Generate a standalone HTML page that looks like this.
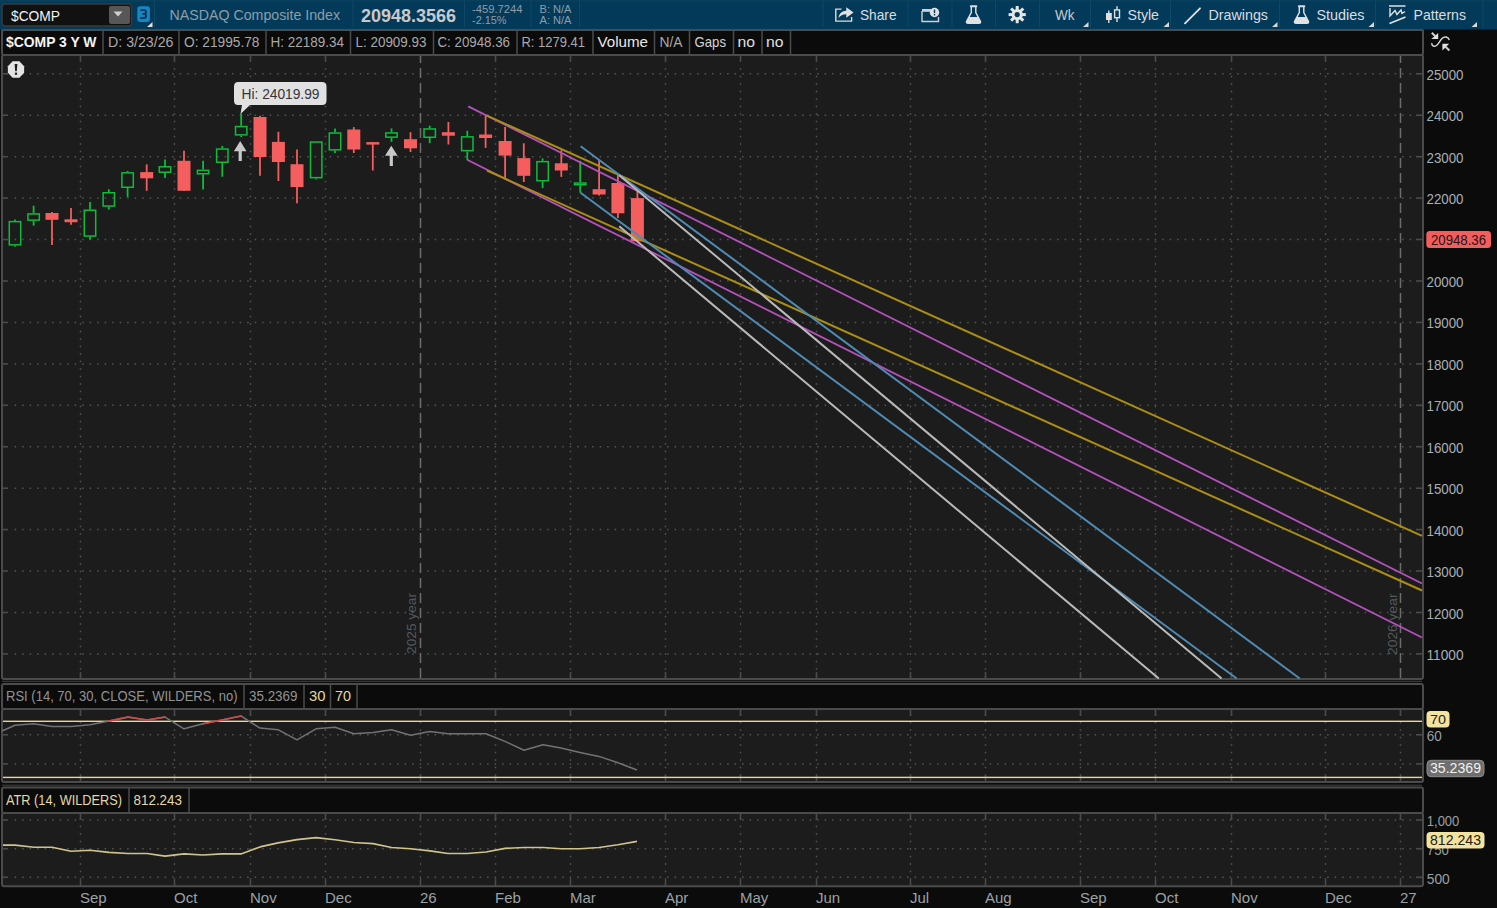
<!DOCTYPE html>
<html><head><meta charset="utf-8"><style>
html,body{margin:0;padding:0;background:#0b0b0b;width:1497px;height:908px;overflow:hidden}
svg{display:block}
</style></head><body>
<svg width="1497" height="908" viewBox="0 0 1497 908">
<rect x="0" y="0" width="1497" height="29.5" fill="#033a59"/>
<rect x="0" y="0" width="1497" height="1.6" fill="#0a3f5b"/>
<rect x="0" y="27.5" width="1423" height="1.5" fill="#013c5d"/>
<rect x="154.0" y="1" width="1" height="26" fill="#0f4767"/>
<rect x="352.5" y="1" width="1" height="26" fill="#0f4767"/>
<rect x="464.0" y="1" width="1" height="26" fill="#0f4767"/>
<rect x="530.5" y="1" width="1" height="26" fill="#0f4767"/>
<rect x="579.0" y="1" width="1" height="26" fill="#0f4767"/>
<rect x="822.5" y="1" width="1" height="26" fill="#0f4767"/>
<rect x="907.5" y="1" width="1" height="26" fill="#0f4767"/>
<rect x="951.5" y="1" width="1" height="26" fill="#0f4767"/>
<rect x="995.0" y="1" width="1" height="26" fill="#0f4767"/>
<rect x="1039.0" y="1" width="1" height="26" fill="#0f4767"/>
<rect x="1090.0" y="1" width="1" height="26" fill="#0f4767"/>
<rect x="1170.0" y="1" width="1" height="26" fill="#0f4767"/>
<rect x="1279.0" y="1" width="1" height="26" fill="#0f4767"/>
<rect x="1375.0" y="1" width="1" height="26" fill="#0f4767"/>
<rect x="1482.5" y="1" width="1" height="26" fill="#0f4767"/>
<rect x="2" y="4" width="129.5" height="22" rx="3" fill="#111" stroke="#3a3a3a" stroke-width="1.5"/>
<rect x="109" y="6" width="21" height="18" rx="2" fill="#575757"/>
<path d="M113.5 11.5 L122.5 11.5 L118 16.5 Z" fill="#cfcfcf"/>
<text x="11" y="20.6" font-family="Liberation Sans" font-size="14.2" font-weight="normal" fill="#f2f2f2" text-anchor="start" textLength="49" lengthAdjust="spacingAndGlyphs">$COMP</text>
<rect x="137.3" y="6.2" width="12.6" height="15.7" rx="2.8" fill="#1686c3"/>
<path d="M140.4 10.1 H144.2 Q146 10.1 146 11.9 Q146 13.9 143.9 13.9 H142.3 M143.9 13.9 Q146.1 13.9 146.1 16 Q146.1 18 143.9 18 H140.3" fill="none" stroke="#08385a" stroke-width="1.9"/>
<path d="M147 27 L152.5 22 L152.5 27 Z" fill="#dedede"/>
<text x="169.5" y="19.5" font-family="Liberation Sans" font-size="14" font-weight="normal" fill="#8b9eaa" text-anchor="start" textLength="170.5" lengthAdjust="spacingAndGlyphs">NASDAQ Composite Index</text>
<text x="361" y="22" font-family="Liberation Sans" font-size="17.5" font-weight="bold" fill="#c9c9c9" text-anchor="start" textLength="95" lengthAdjust="spacingAndGlyphs">20948.3566</text>
<text x="472" y="13" font-family="Liberation Sans" font-size="11.5" font-weight="normal" fill="#8b9eaa" text-anchor="start" textLength="50.5" lengthAdjust="spacingAndGlyphs">-459.7244</text>
<text x="472" y="24" font-family="Liberation Sans" font-size="11.5" font-weight="normal" fill="#8b9eaa" text-anchor="start" textLength="34.5" lengthAdjust="spacingAndGlyphs">-2.15%</text>
<text x="539.5" y="13" font-family="Liberation Sans" font-size="11.5" font-weight="normal" fill="#8b9eaa" text-anchor="start" textLength="32" lengthAdjust="spacingAndGlyphs">B: N/A</text>
<text x="539.5" y="24" font-family="Liberation Sans" font-size="11.5" font-weight="normal" fill="#8b9eaa" text-anchor="start" textLength="32" lengthAdjust="spacingAndGlyphs">A: N/A</text>
<path d="M841.5 9.1 H835.8 V21.1 H851.6 V17" fill="none" stroke="#dcdcdc" stroke-width="1.4"/>
<path d="M838.3 18.2 Q839.5 11.2 846.3 10.8 V7.3 L853.6 12.6 L846.3 17.8 V14.3 Q841.3 14.2 838.3 18.2 Z" fill="#e0e0e0"/>
<text x="860" y="20" font-family="Liberation Sans" font-size="14.6" font-weight="normal" fill="#d9dde0" text-anchor="start" textLength="36.5" lengthAdjust="spacingAndGlyphs">Share</text>
<path d="M922 11 H930 M922 11 V21.5 H938.5 V17" fill="none" stroke="#d0d0d0" stroke-width="1.4"/>
<rect x="922" y="9" width="9" height="2.2" fill="#d0d0d0"/>
<circle cx="934.5" cy="12.5" r="4.7" fill="#e0e0e0"/>
<rect x="933.8" y="9.5" width="1.4" height="3.6" fill="#043a5a"/><rect x="933.8" y="14" width="1.4" height="1.4" fill="#043a5a"/>
<rect x="969.9" y="5.2" width="7.4" height="2" rx="1" fill="#dcdcdc"/>
<path d="M971.3 7 V12.5 L966.5 21.5 Q966 23.2 968 23.2 H979 Q981 23.2 980.5 21.5 L975.8 12.5 V7" fill="none" stroke="#e2e2e2" stroke-width="1.4"/>
<path d="M968.5 17 H978.5 L980.5 21.5 Q981 23.2 979 23.2 H968 Q966 23.2 966.5 21.5 Z" fill="#e2e2e2"/>
<circle cx="1017.2" cy="14.6" r="5.6" fill="#e6e6e6"/>
<rect x="1015.7" y="6.0" width="3" height="5" fill="#e6e6e6" transform="rotate(0 1017.2 14.6)"/>
<rect x="1015.7" y="6.0" width="3" height="5" fill="#e6e6e6" transform="rotate(45 1017.2 14.6)"/>
<rect x="1015.7" y="6.0" width="3" height="5" fill="#e6e6e6" transform="rotate(90 1017.2 14.6)"/>
<rect x="1015.7" y="6.0" width="3" height="5" fill="#e6e6e6" transform="rotate(135 1017.2 14.6)"/>
<rect x="1015.7" y="6.0" width="3" height="5" fill="#e6e6e6" transform="rotate(180 1017.2 14.6)"/>
<rect x="1015.7" y="6.0" width="3" height="5" fill="#e6e6e6" transform="rotate(225 1017.2 14.6)"/>
<rect x="1015.7" y="6.0" width="3" height="5" fill="#e6e6e6" transform="rotate(270 1017.2 14.6)"/>
<rect x="1015.7" y="6.0" width="3" height="5" fill="#e6e6e6" transform="rotate(315 1017.2 14.6)"/>
<circle cx="1017.2" cy="14.6" r="2.6" fill="#033a59"/>
<text x="1055" y="20" font-family="Liberation Sans" font-size="14.6" font-weight="normal" fill="#c8ccce" text-anchor="start" textLength="19.5" lengthAdjust="spacingAndGlyphs">Wk</text>
<path d="M1083 27 L1088.5 22 L1088.5 27 Z" fill="#d8d8d8"/>
<path d="M1163.5 27 L1169.0 22 L1169.0 27 Z" fill="#d8d8d8"/>
<path d="M1272 27 L1277.5 22 L1277.5 27 Z" fill="#d8d8d8"/>
<path d="M1368.5 27 L1374.0 22 L1374.0 27 Z" fill="#d8d8d8"/>
<path d="M1471.5 27 L1477.0 22 L1477.0 27 Z" fill="#d8d8d8"/>
<path d="M1108.8 10.5 V23 M1117 6.3 V22" stroke="#e0e0e0" stroke-width="1.4"/>
<rect x="1106" y="13" width="5.8" height="7" fill="#e0e0e0"/>
<rect x="1114.6" y="9.9" width="4.9" height="7.8" fill="#043a5a" stroke="#e0e0e0" stroke-width="1.4"/>
<text x="1127.5" y="20" font-family="Liberation Sans" font-size="14.6" font-weight="normal" fill="#d9dde0" text-anchor="start" textLength="31.5" lengthAdjust="spacingAndGlyphs">Style</text>
<line x1="1185" y1="23.3" x2="1200" y2="8.3" stroke="#dedede" stroke-width="1.9" stroke-linecap="round"/>
<text x="1208.5" y="20" font-family="Liberation Sans" font-size="14.6" font-weight="normal" fill="#d9dde0" text-anchor="start" textLength="59.5" lengthAdjust="spacingAndGlyphs">Drawings</text>
<rect x="1297.9" y="5.2" width="7.4" height="2" rx="1" fill="#dcdcdc"/>
<path d="M1299.3 7 V12.5 L1294.5 21.5 Q1294 23.2 1296 23.2 H1307 Q1309 23.2 1308.5 21.5 L1303.8 12.5 V7" fill="none" stroke="#e2e2e2" stroke-width="1.4"/>
<path d="M1296.5 17 H1306.5 L1308.5 21.5 Q1309 23.2 1307 23.2 H1296 Q1294 23.2 1294.5 21.5 Z" fill="#e2e2e2"/>
<text x="1316.5" y="20" font-family="Liberation Sans" font-size="14.6" font-weight="normal" fill="#d9dde0" text-anchor="start" textLength="48" lengthAdjust="spacingAndGlyphs">Studies</text>
<path d="M1389 6 H1405.5" stroke="#e0e0e0" stroke-width="1.5"/>
<path d="M1390 8 V16 L1395 10.5 L1397 14.5 L1401 10 L1402 13.5 L1405 11.5" fill="none" stroke="#e0e0e0" stroke-width="1.4"/>
<path d="M1389.5 23.5 L1405.5 17" stroke="#e0e0e0" stroke-width="1.7"/>
<text x="1413.5" y="20" font-family="Liberation Sans" font-size="14.6" font-weight="normal" fill="#d9dde0" text-anchor="start" textLength="52.5" lengthAdjust="spacingAndGlyphs">Patterns</text>
<rect x="1" y="29.3" width="1423" height="1.7" fill="#3d4347"/>
<rect x="2" y="30" width="1421" height="25" rx="2" fill="#0b0b0b" stroke="#4b4b4b" stroke-width="2"/>
<rect x="102.25" y="30" width="1.5" height="25" fill="#4b4b4b"/>
<rect x="178.25" y="30" width="1.5" height="25" fill="#4b4b4b"/>
<rect x="265.25" y="30" width="1.5" height="25" fill="#4b4b4b"/>
<rect x="349.75" y="30" width="1.5" height="25" fill="#4b4b4b"/>
<rect x="432.75" y="30" width="1.5" height="25" fill="#4b4b4b"/>
<rect x="516.25" y="30" width="1.5" height="25" fill="#4b4b4b"/>
<rect x="592.25" y="30" width="1.5" height="25" fill="#4b4b4b"/>
<rect x="653.75" y="30" width="1.5" height="25" fill="#4b4b4b"/>
<rect x="688.75" y="30" width="1.5" height="25" fill="#4b4b4b"/>
<rect x="732.75" y="30" width="1.5" height="25" fill="#4b4b4b"/>
<rect x="761.25" y="30" width="1.5" height="25" fill="#4b4b4b"/>
<rect x="789.75" y="30" width="1.5" height="25" fill="#4b4b4b"/>
<text x="6" y="46.6" font-family="Liberation Sans" font-size="14.8" font-weight="bold" fill="#f4f4f4" text-anchor="start" textLength="90.5" lengthAdjust="spacingAndGlyphs">$COMP 3 Y W</text>
<text x="108" y="46.6" font-family="Liberation Sans" font-size="14.8" font-weight="normal" fill="#a9a9a9" text-anchor="start" textLength="65.5" lengthAdjust="spacingAndGlyphs">D: 3/23/26</text>
<text x="184" y="46.6" font-family="Liberation Sans" font-size="14.8" font-weight="normal" fill="#a9a9a9" text-anchor="start" textLength="75.5" lengthAdjust="spacingAndGlyphs">O: 21995.78</text>
<text x="270.5" y="46.6" font-family="Liberation Sans" font-size="14.8" font-weight="normal" fill="#a9a9a9" text-anchor="start" textLength="73.5" lengthAdjust="spacingAndGlyphs">H: 22189.34</text>
<text x="355.5" y="46.6" font-family="Liberation Sans" font-size="14.8" font-weight="normal" fill="#a9a9a9" text-anchor="start" textLength="71" lengthAdjust="spacingAndGlyphs">L: 20909.93</text>
<text x="437.5" y="46.6" font-family="Liberation Sans" font-size="14.8" font-weight="normal" fill="#a9a9a9" text-anchor="start" textLength="72.5" lengthAdjust="spacingAndGlyphs">C: 20948.36</text>
<text x="521.5" y="46.6" font-family="Liberation Sans" font-size="14.8" font-weight="normal" fill="#a9a9a9" text-anchor="start" textLength="63.5" lengthAdjust="spacingAndGlyphs">R: 1279.41</text>
<text x="597.5" y="46.6" font-family="Liberation Sans" font-size="14.8" font-weight="normal" fill="#e8e8e8" text-anchor="start" textLength="50.5" lengthAdjust="spacingAndGlyphs">Volume</text>
<text x="659.5" y="46.6" font-family="Liberation Sans" font-size="14.8" font-weight="normal" fill="#a9a9a9" text-anchor="start" textLength="23" lengthAdjust="spacingAndGlyphs">N/A</text>
<text x="694.5" y="46.6" font-family="Liberation Sans" font-size="14.8" font-weight="normal" fill="#d4d4d4" text-anchor="start" textLength="31.5" lengthAdjust="spacingAndGlyphs">Gaps</text>
<text x="737.5" y="46.6" font-family="Liberation Sans" font-size="14.8" font-weight="normal" fill="#e0e0e0" text-anchor="start" textLength="17.5" lengthAdjust="spacingAndGlyphs">no</text>
<text x="766" y="46.6" font-family="Liberation Sans" font-size="14.8" font-weight="normal" fill="#e0e0e0" text-anchor="start" textLength="17.5" lengthAdjust="spacingAndGlyphs">no</text>
<rect x="2" y="55" width="1421" height="624" rx="2" fill="#1c1c1c" stroke="#4b4b4b" stroke-width="2"/>
<line x1="14.65" y1="73.8" x2="1415" y2="73.8" stroke="#545454" stroke-width="1.5" stroke-dasharray="1.5,6"/>
<line x1="3" y1="73.8" x2="8" y2="73.8" stroke="#4b4b4b" stroke-width="1.6"/>
<line x1="1416" y1="73.8" x2="1422" y2="73.8" stroke="#4b4b4b" stroke-width="1.6"/>
<text x="1426.5" y="79.8" font-family="Liberation Sans" font-size="14.6" font-weight="normal" fill="#a9b0b4" text-anchor="start" textLength="37" lengthAdjust="spacingAndGlyphs">25000</text>
<line x1="14.65" y1="115.2" x2="1415" y2="115.2" stroke="#545454" stroke-width="1.5" stroke-dasharray="1.5,6"/>
<line x1="3" y1="115.2" x2="8" y2="115.2" stroke="#4b4b4b" stroke-width="1.6"/>
<line x1="1416" y1="115.2" x2="1422" y2="115.2" stroke="#4b4b4b" stroke-width="1.6"/>
<text x="1426.5" y="121.2" font-family="Liberation Sans" font-size="14.6" font-weight="normal" fill="#a9b0b4" text-anchor="start" textLength="37" lengthAdjust="spacingAndGlyphs">24000</text>
<line x1="14.65" y1="156.7" x2="1415" y2="156.7" stroke="#545454" stroke-width="1.5" stroke-dasharray="1.5,6"/>
<line x1="3" y1="156.7" x2="8" y2="156.7" stroke="#4b4b4b" stroke-width="1.6"/>
<line x1="1416" y1="156.7" x2="1422" y2="156.7" stroke="#4b4b4b" stroke-width="1.6"/>
<text x="1426.5" y="162.7" font-family="Liberation Sans" font-size="14.6" font-weight="normal" fill="#a9b0b4" text-anchor="start" textLength="37" lengthAdjust="spacingAndGlyphs">23000</text>
<line x1="14.65" y1="198.1" x2="1415" y2="198.1" stroke="#545454" stroke-width="1.5" stroke-dasharray="1.5,6"/>
<line x1="3" y1="198.1" x2="8" y2="198.1" stroke="#4b4b4b" stroke-width="1.6"/>
<line x1="1416" y1="198.1" x2="1422" y2="198.1" stroke="#4b4b4b" stroke-width="1.6"/>
<text x="1426.5" y="204.1" font-family="Liberation Sans" font-size="14.6" font-weight="normal" fill="#a9b0b4" text-anchor="start" textLength="37" lengthAdjust="spacingAndGlyphs">22000</text>
<line x1="14.65" y1="239.5" x2="1415" y2="239.5" stroke="#545454" stroke-width="1.5" stroke-dasharray="1.5,6"/>
<line x1="3" y1="239.5" x2="8" y2="239.5" stroke="#4b4b4b" stroke-width="1.6"/>
<line x1="1416" y1="239.5" x2="1422" y2="239.5" stroke="#4b4b4b" stroke-width="1.6"/>
<line x1="14.65" y1="281.0" x2="1415" y2="281.0" stroke="#545454" stroke-width="1.5" stroke-dasharray="1.5,6"/>
<line x1="3" y1="281.0" x2="8" y2="281.0" stroke="#4b4b4b" stroke-width="1.6"/>
<line x1="1416" y1="281.0" x2="1422" y2="281.0" stroke="#4b4b4b" stroke-width="1.6"/>
<text x="1426.5" y="287.0" font-family="Liberation Sans" font-size="14.6" font-weight="normal" fill="#a9b0b4" text-anchor="start" textLength="37" lengthAdjust="spacingAndGlyphs">20000</text>
<line x1="14.65" y1="322.4" x2="1415" y2="322.4" stroke="#545454" stroke-width="1.5" stroke-dasharray="1.5,6"/>
<line x1="3" y1="322.4" x2="8" y2="322.4" stroke="#4b4b4b" stroke-width="1.6"/>
<line x1="1416" y1="322.4" x2="1422" y2="322.4" stroke="#4b4b4b" stroke-width="1.6"/>
<text x="1426.5" y="328.4" font-family="Liberation Sans" font-size="14.6" font-weight="normal" fill="#a9b0b4" text-anchor="start" textLength="37" lengthAdjust="spacingAndGlyphs">19000</text>
<line x1="14.65" y1="363.9" x2="1415" y2="363.9" stroke="#545454" stroke-width="1.5" stroke-dasharray="1.5,6"/>
<line x1="3" y1="363.9" x2="8" y2="363.9" stroke="#4b4b4b" stroke-width="1.6"/>
<line x1="1416" y1="363.9" x2="1422" y2="363.9" stroke="#4b4b4b" stroke-width="1.6"/>
<text x="1426.5" y="369.9" font-family="Liberation Sans" font-size="14.6" font-weight="normal" fill="#a9b0b4" text-anchor="start" textLength="37" lengthAdjust="spacingAndGlyphs">18000</text>
<line x1="14.65" y1="405.3" x2="1415" y2="405.3" stroke="#545454" stroke-width="1.5" stroke-dasharray="1.5,6"/>
<line x1="3" y1="405.3" x2="8" y2="405.3" stroke="#4b4b4b" stroke-width="1.6"/>
<line x1="1416" y1="405.3" x2="1422" y2="405.3" stroke="#4b4b4b" stroke-width="1.6"/>
<text x="1426.5" y="411.3" font-family="Liberation Sans" font-size="14.6" font-weight="normal" fill="#a9b0b4" text-anchor="start" textLength="37" lengthAdjust="spacingAndGlyphs">17000</text>
<line x1="14.65" y1="446.7" x2="1415" y2="446.7" stroke="#545454" stroke-width="1.5" stroke-dasharray="1.5,6"/>
<line x1="3" y1="446.7" x2="8" y2="446.7" stroke="#4b4b4b" stroke-width="1.6"/>
<line x1="1416" y1="446.7" x2="1422" y2="446.7" stroke="#4b4b4b" stroke-width="1.6"/>
<text x="1426.5" y="452.7" font-family="Liberation Sans" font-size="14.6" font-weight="normal" fill="#a9b0b4" text-anchor="start" textLength="37" lengthAdjust="spacingAndGlyphs">16000</text>
<line x1="14.65" y1="488.2" x2="1415" y2="488.2" stroke="#545454" stroke-width="1.5" stroke-dasharray="1.5,6"/>
<line x1="3" y1="488.2" x2="8" y2="488.2" stroke="#4b4b4b" stroke-width="1.6"/>
<line x1="1416" y1="488.2" x2="1422" y2="488.2" stroke="#4b4b4b" stroke-width="1.6"/>
<text x="1426.5" y="494.2" font-family="Liberation Sans" font-size="14.6" font-weight="normal" fill="#a9b0b4" text-anchor="start" textLength="37" lengthAdjust="spacingAndGlyphs">15000</text>
<line x1="14.65" y1="529.6" x2="1415" y2="529.6" stroke="#545454" stroke-width="1.5" stroke-dasharray="1.5,6"/>
<line x1="3" y1="529.6" x2="8" y2="529.6" stroke="#4b4b4b" stroke-width="1.6"/>
<line x1="1416" y1="529.6" x2="1422" y2="529.6" stroke="#4b4b4b" stroke-width="1.6"/>
<text x="1426.5" y="535.6" font-family="Liberation Sans" font-size="14.6" font-weight="normal" fill="#a9b0b4" text-anchor="start" textLength="37" lengthAdjust="spacingAndGlyphs">14000</text>
<line x1="14.65" y1="571.0" x2="1415" y2="571.0" stroke="#545454" stroke-width="1.5" stroke-dasharray="1.5,6"/>
<line x1="3" y1="571.0" x2="8" y2="571.0" stroke="#4b4b4b" stroke-width="1.6"/>
<line x1="1416" y1="571.0" x2="1422" y2="571.0" stroke="#4b4b4b" stroke-width="1.6"/>
<text x="1426.5" y="577.0" font-family="Liberation Sans" font-size="14.6" font-weight="normal" fill="#a9b0b4" text-anchor="start" textLength="37" lengthAdjust="spacingAndGlyphs">13000</text>
<line x1="14.65" y1="612.5" x2="1415" y2="612.5" stroke="#545454" stroke-width="1.5" stroke-dasharray="1.5,6"/>
<line x1="3" y1="612.5" x2="8" y2="612.5" stroke="#4b4b4b" stroke-width="1.6"/>
<line x1="1416" y1="612.5" x2="1422" y2="612.5" stroke="#4b4b4b" stroke-width="1.6"/>
<text x="1426.5" y="618.5" font-family="Liberation Sans" font-size="14.6" font-weight="normal" fill="#a9b0b4" text-anchor="start" textLength="37" lengthAdjust="spacingAndGlyphs">12000</text>
<line x1="14.65" y1="653.9" x2="1415" y2="653.9" stroke="#545454" stroke-width="1.5" stroke-dasharray="1.5,6"/>
<line x1="3" y1="653.9" x2="8" y2="653.9" stroke="#4b4b4b" stroke-width="1.6"/>
<line x1="1416" y1="653.9" x2="1422" y2="653.9" stroke="#4b4b4b" stroke-width="1.6"/>
<text x="1426.5" y="659.9" font-family="Liberation Sans" font-size="14.6" font-weight="normal" fill="#a9b0b4" text-anchor="start" textLength="37" lengthAdjust="spacingAndGlyphs">11000</text>
<line x1="80.5" y1="68.25" x2="80.5" y2="678" stroke="#545454" stroke-width="1.5" stroke-dasharray="1.5,6"/>
<line x1="80.5" y1="56" x2="80.5" y2="62" stroke="#4b4b4b" stroke-width="1.6"/>
<line x1="80.5" y1="672" x2="80.5" y2="678" stroke="#4b4b4b" stroke-width="1.6"/>
<line x1="174.5" y1="68.25" x2="174.5" y2="678" stroke="#545454" stroke-width="1.5" stroke-dasharray="1.5,6"/>
<line x1="174.5" y1="56" x2="174.5" y2="62" stroke="#4b4b4b" stroke-width="1.6"/>
<line x1="174.5" y1="672" x2="174.5" y2="678" stroke="#4b4b4b" stroke-width="1.6"/>
<line x1="250.5" y1="68.25" x2="250.5" y2="678" stroke="#545454" stroke-width="1.5" stroke-dasharray="1.5,6"/>
<line x1="250.5" y1="56" x2="250.5" y2="62" stroke="#4b4b4b" stroke-width="1.6"/>
<line x1="250.5" y1="672" x2="250.5" y2="678" stroke="#4b4b4b" stroke-width="1.6"/>
<line x1="325.5" y1="68.25" x2="325.5" y2="678" stroke="#545454" stroke-width="1.5" stroke-dasharray="1.5,6"/>
<line x1="325.5" y1="56" x2="325.5" y2="62" stroke="#4b4b4b" stroke-width="1.6"/>
<line x1="325.5" y1="672" x2="325.5" y2="678" stroke="#4b4b4b" stroke-width="1.6"/>
<line x1="420.5" y1="56" x2="420.5" y2="678" stroke="#6c6c6c" stroke-width="1.5" stroke-dasharray="10,5" stroke-dashoffset="3"/>
<line x1="495.5" y1="68.25" x2="495.5" y2="678" stroke="#545454" stroke-width="1.5" stroke-dasharray="1.5,6"/>
<line x1="495.5" y1="56" x2="495.5" y2="62" stroke="#4b4b4b" stroke-width="1.6"/>
<line x1="495.5" y1="672" x2="495.5" y2="678" stroke="#4b4b4b" stroke-width="1.6"/>
<line x1="570.5" y1="68.25" x2="570.5" y2="678" stroke="#545454" stroke-width="1.5" stroke-dasharray="1.5,6"/>
<line x1="570.5" y1="56" x2="570.5" y2="62" stroke="#4b4b4b" stroke-width="1.6"/>
<line x1="570.5" y1="672" x2="570.5" y2="678" stroke="#4b4b4b" stroke-width="1.6"/>
<line x1="665.5" y1="68.25" x2="665.5" y2="678" stroke="#545454" stroke-width="1.5" stroke-dasharray="1.5,6"/>
<line x1="665.5" y1="56" x2="665.5" y2="62" stroke="#4b4b4b" stroke-width="1.6"/>
<line x1="665.5" y1="672" x2="665.5" y2="678" stroke="#4b4b4b" stroke-width="1.6"/>
<line x1="740.5" y1="68.25" x2="740.5" y2="678" stroke="#545454" stroke-width="1.5" stroke-dasharray="1.5,6"/>
<line x1="740.5" y1="56" x2="740.5" y2="62" stroke="#4b4b4b" stroke-width="1.6"/>
<line x1="740.5" y1="672" x2="740.5" y2="678" stroke="#4b4b4b" stroke-width="1.6"/>
<line x1="816.5" y1="68.25" x2="816.5" y2="678" stroke="#545454" stroke-width="1.5" stroke-dasharray="1.5,6"/>
<line x1="816.5" y1="56" x2="816.5" y2="62" stroke="#4b4b4b" stroke-width="1.6"/>
<line x1="816.5" y1="672" x2="816.5" y2="678" stroke="#4b4b4b" stroke-width="1.6"/>
<line x1="910.5" y1="68.25" x2="910.5" y2="678" stroke="#545454" stroke-width="1.5" stroke-dasharray="1.5,6"/>
<line x1="910.5" y1="56" x2="910.5" y2="62" stroke="#4b4b4b" stroke-width="1.6"/>
<line x1="910.5" y1="672" x2="910.5" y2="678" stroke="#4b4b4b" stroke-width="1.6"/>
<line x1="985.5" y1="68.25" x2="985.5" y2="678" stroke="#545454" stroke-width="1.5" stroke-dasharray="1.5,6"/>
<line x1="985.5" y1="56" x2="985.5" y2="62" stroke="#4b4b4b" stroke-width="1.6"/>
<line x1="985.5" y1="672" x2="985.5" y2="678" stroke="#4b4b4b" stroke-width="1.6"/>
<line x1="1080.5" y1="68.25" x2="1080.5" y2="678" stroke="#545454" stroke-width="1.5" stroke-dasharray="1.5,6"/>
<line x1="1080.5" y1="56" x2="1080.5" y2="62" stroke="#4b4b4b" stroke-width="1.6"/>
<line x1="1080.5" y1="672" x2="1080.5" y2="678" stroke="#4b4b4b" stroke-width="1.6"/>
<line x1="1155.5" y1="68.25" x2="1155.5" y2="678" stroke="#545454" stroke-width="1.5" stroke-dasharray="1.5,6"/>
<line x1="1155.5" y1="56" x2="1155.5" y2="62" stroke="#4b4b4b" stroke-width="1.6"/>
<line x1="1155.5" y1="672" x2="1155.5" y2="678" stroke="#4b4b4b" stroke-width="1.6"/>
<line x1="1231.5" y1="68.25" x2="1231.5" y2="678" stroke="#545454" stroke-width="1.5" stroke-dasharray="1.5,6"/>
<line x1="1231.5" y1="56" x2="1231.5" y2="62" stroke="#4b4b4b" stroke-width="1.6"/>
<line x1="1231.5" y1="672" x2="1231.5" y2="678" stroke="#4b4b4b" stroke-width="1.6"/>
<line x1="1325.5" y1="68.25" x2="1325.5" y2="678" stroke="#545454" stroke-width="1.5" stroke-dasharray="1.5,6"/>
<line x1="1325.5" y1="56" x2="1325.5" y2="62" stroke="#4b4b4b" stroke-width="1.6"/>
<line x1="1325.5" y1="672" x2="1325.5" y2="678" stroke="#4b4b4b" stroke-width="1.6"/>
<line x1="1400.5" y1="56" x2="1400.5" y2="678" stroke="#6c6c6c" stroke-width="1.5" stroke-dasharray="10,5" stroke-dashoffset="3"/>
<rect x="2" y="680.7" width="1420" height="1.4" fill="#363636"/>
<line x1="15" y1="219.5" x2="15" y2="220.9" stroke="#0cbd3c" stroke-width="1.8"/>
<line x1="15" y1="245.6" x2="15" y2="246.8" stroke="#0cbd3c" stroke-width="1.8"/>
<rect x="9.3" y="221.65" width="11.4" height="23.19999999999999" fill="none" stroke="#0cbd3c" stroke-width="1.5"/>
<line x1="33.6" y1="205.7" x2="33.6" y2="213.2" stroke="#0cbd3c" stroke-width="1.8"/>
<line x1="33.6" y1="220.9" x2="33.6" y2="225.7" stroke="#0cbd3c" stroke-width="1.8"/>
<rect x="27.900000000000002" y="213.95" width="11.4" height="6.200000000000017" fill="none" stroke="#0cbd3c" stroke-width="1.5"/>
<line x1="52" y1="212.1" x2="52" y2="244.9" stroke="#f45e5e" stroke-width="1.8"/>
<rect x="45.5" y="213" width="13" height="6.800000000000011" fill="#f45e5e"/>
<line x1="71" y1="208" x2="71" y2="224.8" stroke="#f45e5e" stroke-width="1.8"/>
<rect x="64.5" y="219.3" width="13" height="2.8999999999999773" fill="#f45e5e"/>
<line x1="90" y1="201.9" x2="90" y2="209.5" stroke="#0cbd3c" stroke-width="1.8"/>
<line x1="90" y1="236.8" x2="90" y2="239.6" stroke="#0cbd3c" stroke-width="1.8"/>
<rect x="84.3" y="210.25" width="11.4" height="25.80000000000001" fill="none" stroke="#0cbd3c" stroke-width="1.5"/>
<line x1="108.8" y1="189.2" x2="108.8" y2="192" stroke="#0cbd3c" stroke-width="1.8"/>
<line x1="108.8" y1="206.8" x2="108.8" y2="209.6" stroke="#0cbd3c" stroke-width="1.8"/>
<rect x="103.1" y="192.75" width="11.4" height="13.300000000000011" fill="none" stroke="#0cbd3c" stroke-width="1.5"/>
<line x1="127.6" y1="171" x2="127.6" y2="172.1" stroke="#0cbd3c" stroke-width="1.8"/>
<line x1="127.6" y1="188" x2="127.6" y2="197" stroke="#0cbd3c" stroke-width="1.8"/>
<rect x="121.89999999999999" y="172.85" width="11.4" height="14.400000000000006" fill="none" stroke="#0cbd3c" stroke-width="1.5"/>
<line x1="146.7" y1="164.4" x2="146.7" y2="190.8" stroke="#f45e5e" stroke-width="1.8"/>
<rect x="140.2" y="172.1" width="13" height="6.200000000000017" fill="#f45e5e"/>
<line x1="165" y1="159.5" x2="165" y2="166" stroke="#0cbd3c" stroke-width="1.8"/>
<line x1="165" y1="173" x2="165" y2="178" stroke="#0cbd3c" stroke-width="1.8"/>
<rect x="159.3" y="166.75" width="11.4" height="5.5" fill="none" stroke="#0cbd3c" stroke-width="1.5"/>
<line x1="184" y1="150.7" x2="184" y2="190.8" stroke="#f45e5e" stroke-width="1.8"/>
<rect x="177.5" y="160.8" width="13" height="30.0" fill="#f45e5e"/>
<line x1="203.1" y1="160.8" x2="203.1" y2="169.6" stroke="#0cbd3c" stroke-width="1.8"/>
<line x1="203.1" y1="174.5" x2="203.1" y2="189.5" stroke="#0cbd3c" stroke-width="1.8"/>
<rect x="197.4" y="170.35" width="11.4" height="3.4000000000000057" fill="none" stroke="#0cbd3c" stroke-width="1.5"/>
<line x1="222.3" y1="145.9" x2="222.3" y2="148.3" stroke="#0cbd3c" stroke-width="1.8"/>
<line x1="222.3" y1="163" x2="222.3" y2="176.7" stroke="#0cbd3c" stroke-width="1.8"/>
<rect x="216.60000000000002" y="149.05" width="11.4" height="13.199999999999989" fill="none" stroke="#0cbd3c" stroke-width="1.5"/>
<line x1="241.2" y1="113.6" x2="241.2" y2="125.8" stroke="#0cbd3c" stroke-width="1.8"/>
<line x1="241.2" y1="135.6" x2="241.2" y2="137" stroke="#0cbd3c" stroke-width="1.8"/>
<rect x="235.5" y="126.55" width="11.4" height="8.299999999999997" fill="none" stroke="#0cbd3c" stroke-width="1.5"/>
<line x1="260" y1="115.8" x2="260" y2="175.7" stroke="#f45e5e" stroke-width="1.8"/>
<rect x="253.5" y="117" width="13" height="40" fill="#f45e5e"/>
<line x1="278.4" y1="131.8" x2="278.4" y2="181" stroke="#f45e5e" stroke-width="1.8"/>
<rect x="271.9" y="141.9" width="13" height="20.099999999999994" fill="#f45e5e"/>
<line x1="297" y1="149.5" x2="297" y2="203.2" stroke="#f45e5e" stroke-width="1.8"/>
<rect x="290.5" y="164.2" width="13" height="22.900000000000006" fill="#f45e5e"/>
<line x1="316.2" y1="141.3" x2="316.2" y2="141.3" stroke="#0cbd3c" stroke-width="1.8"/>
<line x1="316.2" y1="178.4" x2="316.2" y2="179.5" stroke="#0cbd3c" stroke-width="1.8"/>
<rect x="310.5" y="142.05" width="11.4" height="35.599999999999994" fill="none" stroke="#0cbd3c" stroke-width="1.5"/>
<line x1="335" y1="128.4" x2="335" y2="132.3" stroke="#0cbd3c" stroke-width="1.8"/>
<line x1="335" y1="150.6" x2="335" y2="153" stroke="#0cbd3c" stroke-width="1.8"/>
<rect x="329.3" y="133.05" width="11.4" height="16.799999999999983" fill="none" stroke="#0cbd3c" stroke-width="1.5"/>
<line x1="353.8" y1="127.1" x2="353.8" y2="153" stroke="#f45e5e" stroke-width="1.8"/>
<rect x="347.3" y="129.5" width="13" height="20.0" fill="#f45e5e"/>
<line x1="372.8" y1="142" x2="372.8" y2="170.5" stroke="#f45e5e" stroke-width="1.8"/>
<rect x="366.3" y="142.1" width="13" height="2.5" fill="#f45e5e"/>
<line x1="391.5" y1="128.4" x2="391.5" y2="132.2" stroke="#0cbd3c" stroke-width="1.8"/>
<line x1="391.5" y1="137.9" x2="391.5" y2="141.8" stroke="#0cbd3c" stroke-width="1.8"/>
<rect x="385.8" y="132.95" width="11.4" height="4.200000000000017" fill="none" stroke="#0cbd3c" stroke-width="1.5"/>
<line x1="410.5" y1="132.2" x2="410.5" y2="152" stroke="#f45e5e" stroke-width="1.8"/>
<rect x="404.0" y="139.2" width="13" height="9.100000000000023" fill="#f45e5e"/>
<line x1="429.7" y1="125.7" x2="429.7" y2="128.2" stroke="#0cbd3c" stroke-width="1.8"/>
<line x1="429.7" y1="138" x2="429.7" y2="143.2" stroke="#0cbd3c" stroke-width="1.8"/>
<rect x="424.0" y="128.95" width="11.4" height="8.300000000000011" fill="none" stroke="#0cbd3c" stroke-width="1.5"/>
<line x1="448.4" y1="122" x2="448.4" y2="144.5" stroke="#f45e5e" stroke-width="1.8"/>
<rect x="441.9" y="132.2" width="13" height="3.5" fill="#f45e5e"/>
<line x1="467.3" y1="130.8" x2="467.3" y2="136.1" stroke="#0cbd3c" stroke-width="1.8"/>
<line x1="467.3" y1="151.4" x2="467.3" y2="160.4" stroke="#0cbd3c" stroke-width="1.8"/>
<rect x="461.6" y="136.85" width="11.4" height="13.800000000000011" fill="none" stroke="#0cbd3c" stroke-width="1.5"/>
<line x1="485.6" y1="115.4" x2="485.6" y2="147.9" stroke="#f45e5e" stroke-width="1.8"/>
<rect x="479.1" y="134.5" width="13" height="3.5" fill="#f45e5e"/>
<line x1="505.1" y1="127" x2="505.1" y2="178.7" stroke="#f45e5e" stroke-width="1.8"/>
<rect x="498.6" y="141" width="13" height="14.599999999999994" fill="#f45e5e"/>
<line x1="523.8" y1="143.3" x2="523.8" y2="182" stroke="#f45e5e" stroke-width="1.8"/>
<rect x="517.3" y="158.1" width="13" height="17.700000000000017" fill="#f45e5e"/>
<line x1="542.6" y1="158.4" x2="542.6" y2="160.9" stroke="#0cbd3c" stroke-width="1.8"/>
<line x1="542.6" y1="181.5" x2="542.6" y2="188.1" stroke="#0cbd3c" stroke-width="1.8"/>
<rect x="536.9" y="161.65" width="11.4" height="19.099999999999994" fill="none" stroke="#0cbd3c" stroke-width="1.5"/>
<line x1="561.3" y1="150.4" x2="561.3" y2="176.9" stroke="#f45e5e" stroke-width="1.8"/>
<rect x="554.8" y="163.3" width="13" height="7.199999999999989" fill="#f45e5e"/>
<line x1="580.2" y1="160.8" x2="580.2" y2="182.3" stroke="#0cbd3c" stroke-width="1.8"/>
<line x1="580.2" y1="185.5" x2="580.2" y2="192.8" stroke="#0cbd3c" stroke-width="1.8"/>
<rect x="574.5" y="183.05" width="11.4" height="1.6999999999999886" fill="none" stroke="#0cbd3c" stroke-width="1.5"/>
<line x1="599.1" y1="159.9" x2="599.1" y2="195.5" stroke="#f45e5e" stroke-width="1.8"/>
<rect x="592.6" y="189.2" width="13" height="5.300000000000011" fill="#f45e5e"/>
<line x1="617.9" y1="174.7" x2="617.9" y2="218" stroke="#f45e5e" stroke-width="1.8"/>
<rect x="611.4" y="183" width="13" height="30.30000000000001" fill="#f45e5e"/>
<line x1="637.4" y1="190.5" x2="637.4" y2="241.4" stroke="#f45e5e" stroke-width="1.8"/>
<rect x="630.9" y="198.1" width="13" height="43.30000000000001" fill="#f45e5e"/>
<line x1="468.2" y1="106.4" x2="1422.0" y2="583.5" stroke="#b850c0" stroke-width="1.8"/>
<line x1="467.7" y1="160" x2="1422.0" y2="637.5" stroke="#b850c0" stroke-width="1.8"/>
<line x1="486.4" y1="115.4" x2="1422.0" y2="535.9" stroke="#ab8e12" stroke-width="2.0"/>
<line x1="486.9" y1="170.5" x2="1422.0" y2="590.5" stroke="#ab8e12" stroke-width="2.0"/>
<line x1="580.6" y1="146.2" x2="1299.7" y2="678.5" stroke="#4f8bb4" stroke-width="2.0"/>
<line x1="580.6" y1="192.8" x2="1236.7" y2="678.5" stroke="#4f8bb4" stroke-width="2.0"/>
<line x1="619.2" y1="175.3" x2="1221.6" y2="678.5" stroke="#bababa" stroke-width="2.0"/>
<line x1="619.2" y1="226.3" x2="1158.8" y2="678.5" stroke="#bababa" stroke-width="2.0"/>
<path d="M240.2 140.9 L246.5 151.2 L241.79999999999998 151.2 L241.79999999999998 161 L238.6 161 L238.6 151.2 L233.89999999999998 151.2 Z" fill="#c8c8c8"/>
<path d="M391.3 145.8 L397.6 155.7 L392.90000000000003 155.7 L392.90000000000003 165.9 L389.7 165.9 L389.7 155.7 L385.0 155.7 Z" fill="#c8c8c8"/>
<text x="416" y="654" transform="rotate(-90 416 654)" font-family="Liberation Sans" font-size="13.5" fill="#525a5d" textLength="61" lengthAdjust="spacingAndGlyphs">2025 year</text>
<text x="1396.5" y="655" transform="rotate(-90 1396.5 655)" font-family="Liberation Sans" font-size="13.5" fill="#525a5d" textLength="61.5" lengthAdjust="spacingAndGlyphs">2026 year</text>
<polygon points="24.13,72.87 19.37,77.63 12.63,77.63 7.87,72.87 7.87,66.13 12.63,61.37 19.37,61.37 24.13,66.13" fill="#e4e4e4"/>
<path d="M14.6 64 H17.4 L16.8 71.2 H15.2 Z" fill="#1e1e1e"/>
<rect x="14.9" y="72.6" width="2.2" height="2.2" fill="#1e1e1e"/>
<path d="M238 82 H322 Q326.5 82 326.5 86.5 V100.5 Q326.5 105 322 105 H250 L240.5 114 L242 105 H238 Q234 105 234 100.5 V86.5 Q234 82 238 82 Z" fill="#e1e1e1"/>
<text x="241.5" y="99.2" font-family="Liberation Sans" font-size="14.2" font-weight="normal" fill="#34343c" text-anchor="start" textLength="78" lengthAdjust="spacingAndGlyphs">Hi: 24019.99</text>
<rect x="1426.3" y="231" width="64.7" height="17" rx="3.5" fill="#f25e5e"/>
<text x="1431" y="244.5" font-family="Liberation Sans" font-size="14" font-weight="normal" fill="#2a1414" text-anchor="start" textLength="55" lengthAdjust="spacingAndGlyphs">20948.36</text>
<path d="M1431.6 43.2 C1432 46.5 1434.5 47 1436.5 45.5 C1438.5 44 1440 40.5 1442 38.5 C1444.5 36 1448 36.5 1449.3 40" fill="none" stroke="#d8d8d8" stroke-width="1.4"/>
<path d="M1431.3 39.1 L1438.2 39.1 L1438.2 32.9 Z" fill="#e0e0e0"/>
<line x1="1431.8" y1="32.8" x2="1435.5" y2="36.5" stroke="#cfcfcf" stroke-width="2"/>
<path d="M1442.4 43.7 L1449.1 43.7 L1442.4 50.4 Z" fill="#e0e0e0"/>
<line x1="1445.5" y1="46.8" x2="1449.4" y2="50.5" stroke="#cfcfcf" stroke-width="2"/>
<rect x="2" y="684" width="1421" height="25" rx="2" fill="#0b0b0b" stroke="#4b4b4b" stroke-width="2"/>
<rect x="243.25" y="684" width="1.5" height="25" fill="#4b4b4b"/>
<rect x="303.25" y="684" width="1.5" height="25" fill="#4b4b4b"/>
<rect x="329.75" y="684" width="1.5" height="25" fill="#4b4b4b"/>
<rect x="356.25" y="684" width="1.5" height="25" fill="#4b4b4b"/>
<text x="6" y="700.9" font-family="Liberation Sans" font-size="14.2" font-weight="normal" fill="#929292" text-anchor="start" textLength="231.5" lengthAdjust="spacingAndGlyphs">RSI (14, 70, 30, CLOSE, WILDERS, no)</text>
<text x="249" y="700.9" font-family="Liberation Sans" font-size="14.2" font-weight="normal" fill="#929292" text-anchor="start" textLength="48.5" lengthAdjust="spacingAndGlyphs">35.2369</text>
<text x="309" y="700.9" font-family="Liberation Sans" font-size="14.2" font-weight="normal" fill="#e6d79a" text-anchor="start" textLength="16.5" lengthAdjust="spacingAndGlyphs">30</text>
<text x="335" y="700.9" font-family="Liberation Sans" font-size="14.2" font-weight="normal" fill="#e6d79a" text-anchor="start" textLength="16" lengthAdjust="spacingAndGlyphs">70</text>
<rect x="2" y="709" width="1421" height="73" rx="2" fill="#1c1c1c" stroke="#4b4b4b" stroke-width="2"/>
<line x1="14.65" y1="734.8" x2="1415" y2="734.8" stroke="#545454" stroke-width="1.5" stroke-dasharray="1.5,6"/>
<line x1="3" y1="734.8" x2="8" y2="734.8" stroke="#4b4b4b" stroke-width="1.6"/>
<line x1="1416" y1="734.8" x2="1422" y2="734.8" stroke="#4b4b4b" stroke-width="1.6"/>
<line x1="14.65" y1="763.9" x2="1415" y2="763.9" stroke="#545454" stroke-width="1.5" stroke-dasharray="1.5,6"/>
<line x1="3" y1="763.9" x2="8" y2="763.9" stroke="#4b4b4b" stroke-width="1.6"/>
<line x1="1416" y1="763.9" x2="1422" y2="763.9" stroke="#4b4b4b" stroke-width="1.6"/>
<line x1="80.5" y1="714.15" x2="80.5" y2="775" stroke="#545454" stroke-width="1.5" stroke-dasharray="1.5,6"/>
<line x1="80.5" y1="710" x2="80.5" y2="716" stroke="#4b4b4b" stroke-width="1.6"/>
<line x1="80.5" y1="775" x2="80.5" y2="781" stroke="#4b4b4b" stroke-width="1.6"/>
<line x1="174.5" y1="714.15" x2="174.5" y2="775" stroke="#545454" stroke-width="1.5" stroke-dasharray="1.5,6"/>
<line x1="174.5" y1="710" x2="174.5" y2="716" stroke="#4b4b4b" stroke-width="1.6"/>
<line x1="174.5" y1="775" x2="174.5" y2="781" stroke="#4b4b4b" stroke-width="1.6"/>
<line x1="250.5" y1="714.15" x2="250.5" y2="775" stroke="#545454" stroke-width="1.5" stroke-dasharray="1.5,6"/>
<line x1="250.5" y1="710" x2="250.5" y2="716" stroke="#4b4b4b" stroke-width="1.6"/>
<line x1="250.5" y1="775" x2="250.5" y2="781" stroke="#4b4b4b" stroke-width="1.6"/>
<line x1="325.5" y1="714.15" x2="325.5" y2="775" stroke="#545454" stroke-width="1.5" stroke-dasharray="1.5,6"/>
<line x1="325.5" y1="710" x2="325.5" y2="716" stroke="#4b4b4b" stroke-width="1.6"/>
<line x1="325.5" y1="775" x2="325.5" y2="781" stroke="#4b4b4b" stroke-width="1.6"/>
<line x1="420.5" y1="714.15" x2="420.5" y2="775" stroke="#545454" stroke-width="1.5" stroke-dasharray="1.5,6"/>
<line x1="420.5" y1="710" x2="420.5" y2="716" stroke="#4b4b4b" stroke-width="1.6"/>
<line x1="420.5" y1="775" x2="420.5" y2="781" stroke="#4b4b4b" stroke-width="1.6"/>
<line x1="495.5" y1="714.15" x2="495.5" y2="775" stroke="#545454" stroke-width="1.5" stroke-dasharray="1.5,6"/>
<line x1="495.5" y1="710" x2="495.5" y2="716" stroke="#4b4b4b" stroke-width="1.6"/>
<line x1="495.5" y1="775" x2="495.5" y2="781" stroke="#4b4b4b" stroke-width="1.6"/>
<line x1="570.5" y1="714.15" x2="570.5" y2="775" stroke="#545454" stroke-width="1.5" stroke-dasharray="1.5,6"/>
<line x1="570.5" y1="710" x2="570.5" y2="716" stroke="#4b4b4b" stroke-width="1.6"/>
<line x1="570.5" y1="775" x2="570.5" y2="781" stroke="#4b4b4b" stroke-width="1.6"/>
<line x1="665.5" y1="714.15" x2="665.5" y2="775" stroke="#545454" stroke-width="1.5" stroke-dasharray="1.5,6"/>
<line x1="665.5" y1="710" x2="665.5" y2="716" stroke="#4b4b4b" stroke-width="1.6"/>
<line x1="665.5" y1="775" x2="665.5" y2="781" stroke="#4b4b4b" stroke-width="1.6"/>
<line x1="740.5" y1="714.15" x2="740.5" y2="775" stroke="#545454" stroke-width="1.5" stroke-dasharray="1.5,6"/>
<line x1="740.5" y1="710" x2="740.5" y2="716" stroke="#4b4b4b" stroke-width="1.6"/>
<line x1="740.5" y1="775" x2="740.5" y2="781" stroke="#4b4b4b" stroke-width="1.6"/>
<line x1="816.5" y1="714.15" x2="816.5" y2="775" stroke="#545454" stroke-width="1.5" stroke-dasharray="1.5,6"/>
<line x1="816.5" y1="710" x2="816.5" y2="716" stroke="#4b4b4b" stroke-width="1.6"/>
<line x1="816.5" y1="775" x2="816.5" y2="781" stroke="#4b4b4b" stroke-width="1.6"/>
<line x1="910.5" y1="714.15" x2="910.5" y2="775" stroke="#545454" stroke-width="1.5" stroke-dasharray="1.5,6"/>
<line x1="910.5" y1="710" x2="910.5" y2="716" stroke="#4b4b4b" stroke-width="1.6"/>
<line x1="910.5" y1="775" x2="910.5" y2="781" stroke="#4b4b4b" stroke-width="1.6"/>
<line x1="985.5" y1="714.15" x2="985.5" y2="775" stroke="#545454" stroke-width="1.5" stroke-dasharray="1.5,6"/>
<line x1="985.5" y1="710" x2="985.5" y2="716" stroke="#4b4b4b" stroke-width="1.6"/>
<line x1="985.5" y1="775" x2="985.5" y2="781" stroke="#4b4b4b" stroke-width="1.6"/>
<line x1="1080.5" y1="714.15" x2="1080.5" y2="775" stroke="#545454" stroke-width="1.5" stroke-dasharray="1.5,6"/>
<line x1="1080.5" y1="710" x2="1080.5" y2="716" stroke="#4b4b4b" stroke-width="1.6"/>
<line x1="1080.5" y1="775" x2="1080.5" y2="781" stroke="#4b4b4b" stroke-width="1.6"/>
<line x1="1155.5" y1="714.15" x2="1155.5" y2="775" stroke="#545454" stroke-width="1.5" stroke-dasharray="1.5,6"/>
<line x1="1155.5" y1="710" x2="1155.5" y2="716" stroke="#4b4b4b" stroke-width="1.6"/>
<line x1="1155.5" y1="775" x2="1155.5" y2="781" stroke="#4b4b4b" stroke-width="1.6"/>
<line x1="1231.5" y1="714.15" x2="1231.5" y2="775" stroke="#545454" stroke-width="1.5" stroke-dasharray="1.5,6"/>
<line x1="1231.5" y1="710" x2="1231.5" y2="716" stroke="#4b4b4b" stroke-width="1.6"/>
<line x1="1231.5" y1="775" x2="1231.5" y2="781" stroke="#4b4b4b" stroke-width="1.6"/>
<line x1="1325.5" y1="714.15" x2="1325.5" y2="775" stroke="#545454" stroke-width="1.5" stroke-dasharray="1.5,6"/>
<line x1="1325.5" y1="710" x2="1325.5" y2="716" stroke="#4b4b4b" stroke-width="1.6"/>
<line x1="1325.5" y1="775" x2="1325.5" y2="781" stroke="#4b4b4b" stroke-width="1.6"/>
<line x1="1400.5" y1="714.15" x2="1400.5" y2="775" stroke="#545454" stroke-width="1.5" stroke-dasharray="1.5,6"/>
<line x1="1400.5" y1="710" x2="1400.5" y2="716" stroke="#4b4b4b" stroke-width="1.6"/>
<line x1="1400.5" y1="775" x2="1400.5" y2="781" stroke="#4b4b4b" stroke-width="1.6"/>
<rect x="3" y="720.6" width="1419" height="1.4" fill="#e8d898"/>
<rect x="3" y="776.7" width="1419" height="1.4" fill="#e8d898"/>
<polyline points="2,731 15,725.3 33.6,723.7 52,726.4 71,726.4 90,724.8 109,721.1 128,717.1 147,720 165,717.1 184,728.8 203,723.7 222,720 241,716 260,728.1 278,729.7 297,739.8 316,728.8 335,727.3 354,733.7 373,732.6 391.5,729.7 410.5,735.2 429.7,731.5 448,733.7 467,733.7 486,733.7 505,741.4 524,750.2 543,744.7 561,748 580,752.4 599,756.4 618,762.8 637,770" fill="none" stroke="#727272" stroke-width="1.5" stroke-linejoin="round"/>
<line x1="109" y1="721.1" x2="128" y2="717.1" stroke="#d24848" stroke-width="1.6" stroke-linecap="round"/>
<line x1="128" y1="717.1" x2="147" y2="720" stroke="#d24848" stroke-width="1.6" stroke-linecap="round"/>
<line x1="147" y1="720" x2="165" y2="717.1" stroke="#d24848" stroke-width="1.6" stroke-linecap="round"/>
<line x1="203" y1="723.7" x2="222" y2="720" stroke="#d24848" stroke-width="1.6" stroke-linecap="round"/>
<line x1="222" y1="720" x2="241" y2="716" stroke="#d24848" stroke-width="1.6" stroke-linecap="round"/>
<rect x="1426.5" y="711" width="23" height="16.5" rx="4" fill="#f2e3a1"/>
<text x="1430" y="724" font-family="Liberation Sans" font-size="13.5" font-weight="normal" fill="#262010" text-anchor="start" textLength="16" lengthAdjust="spacingAndGlyphs">70</text>
<text x="1426.8" y="741.3" font-family="Liberation Sans" font-size="14.6" font-weight="normal" fill="#9aa0a3" text-anchor="start" textLength="15" lengthAdjust="spacingAndGlyphs">60</text>
<rect x="1427" y="760.3" width="57" height="16.4" rx="4" fill="#6f6f6f" stroke="#8c8c8c" stroke-width="1"/>
<text x="1430" y="773" font-family="Liberation Sans" font-size="14" font-weight="normal" fill="#f0f0f0" text-anchor="start" textLength="51" lengthAdjust="spacingAndGlyphs">35.2369</text>
<rect x="2" y="784.6" width="1420" height="1.3" fill="#363636"/>
<rect x="2" y="787.6" width="1421" height="25.399999999999977" rx="2" fill="#0b0b0b" stroke="#4b4b4b" stroke-width="2"/>
<rect x="128.25" y="788" width="1.5" height="25" fill="#4b4b4b"/>
<rect x="188.25" y="788" width="1.5" height="25" fill="#4b4b4b"/>
<text x="6" y="805" font-family="Liberation Sans" font-size="14.2" font-weight="normal" fill="#e3d8a6" text-anchor="start" textLength="116" lengthAdjust="spacingAndGlyphs">ATR (14, WILDERS)</text>
<text x="133.5" y="805" font-family="Liberation Sans" font-size="14.2" font-weight="normal" fill="#e3d8a6" text-anchor="start" textLength="48.5" lengthAdjust="spacingAndGlyphs">812.243</text>
<rect x="2" y="813" width="1421" height="73.29999999999995" rx="2" fill="#1c1c1c" stroke="#4b4b4b" stroke-width="2"/>
<line x1="14.65" y1="820" x2="1415" y2="820" stroke="#545454" stroke-width="1.5" stroke-dasharray="1.5,6"/>
<line x1="3" y1="820" x2="8" y2="820" stroke="#4b4b4b" stroke-width="1.6"/>
<line x1="1416" y1="820" x2="1422" y2="820" stroke="#4b4b4b" stroke-width="1.6"/>
<line x1="14.65" y1="848.7" x2="1415" y2="848.7" stroke="#545454" stroke-width="1.5" stroke-dasharray="1.5,6"/>
<line x1="3" y1="848.7" x2="8" y2="848.7" stroke="#4b4b4b" stroke-width="1.6"/>
<line x1="1416" y1="848.7" x2="1422" y2="848.7" stroke="#4b4b4b" stroke-width="1.6"/>
<line x1="14.65" y1="877.3" x2="1415" y2="877.3" stroke="#545454" stroke-width="1.5" stroke-dasharray="1.5,6"/>
<line x1="3" y1="877.3" x2="8" y2="877.3" stroke="#4b4b4b" stroke-width="1.6"/>
<line x1="1416" y1="877.3" x2="1422" y2="877.3" stroke="#4b4b4b" stroke-width="1.6"/>
<line x1="80.5" y1="818.15" x2="80.5" y2="880" stroke="#545454" stroke-width="1.5" stroke-dasharray="1.5,6"/>
<line x1="80.5" y1="814" x2="80.5" y2="820" stroke="#4b4b4b" stroke-width="1.6"/>
<line x1="80.5" y1="880" x2="80.5" y2="886" stroke="#4b4b4b" stroke-width="1.6"/>
<line x1="174.5" y1="818.15" x2="174.5" y2="880" stroke="#545454" stroke-width="1.5" stroke-dasharray="1.5,6"/>
<line x1="174.5" y1="814" x2="174.5" y2="820" stroke="#4b4b4b" stroke-width="1.6"/>
<line x1="174.5" y1="880" x2="174.5" y2="886" stroke="#4b4b4b" stroke-width="1.6"/>
<line x1="250.5" y1="818.15" x2="250.5" y2="880" stroke="#545454" stroke-width="1.5" stroke-dasharray="1.5,6"/>
<line x1="250.5" y1="814" x2="250.5" y2="820" stroke="#4b4b4b" stroke-width="1.6"/>
<line x1="250.5" y1="880" x2="250.5" y2="886" stroke="#4b4b4b" stroke-width="1.6"/>
<line x1="325.5" y1="818.15" x2="325.5" y2="880" stroke="#545454" stroke-width="1.5" stroke-dasharray="1.5,6"/>
<line x1="325.5" y1="814" x2="325.5" y2="820" stroke="#4b4b4b" stroke-width="1.6"/>
<line x1="325.5" y1="880" x2="325.5" y2="886" stroke="#4b4b4b" stroke-width="1.6"/>
<line x1="420.5" y1="818.15" x2="420.5" y2="880" stroke="#545454" stroke-width="1.5" stroke-dasharray="1.5,6"/>
<line x1="420.5" y1="814" x2="420.5" y2="820" stroke="#4b4b4b" stroke-width="1.6"/>
<line x1="420.5" y1="880" x2="420.5" y2="886" stroke="#4b4b4b" stroke-width="1.6"/>
<line x1="495.5" y1="818.15" x2="495.5" y2="880" stroke="#545454" stroke-width="1.5" stroke-dasharray="1.5,6"/>
<line x1="495.5" y1="814" x2="495.5" y2="820" stroke="#4b4b4b" stroke-width="1.6"/>
<line x1="495.5" y1="880" x2="495.5" y2="886" stroke="#4b4b4b" stroke-width="1.6"/>
<line x1="570.5" y1="818.15" x2="570.5" y2="880" stroke="#545454" stroke-width="1.5" stroke-dasharray="1.5,6"/>
<line x1="570.5" y1="814" x2="570.5" y2="820" stroke="#4b4b4b" stroke-width="1.6"/>
<line x1="570.5" y1="880" x2="570.5" y2="886" stroke="#4b4b4b" stroke-width="1.6"/>
<line x1="665.5" y1="818.15" x2="665.5" y2="880" stroke="#545454" stroke-width="1.5" stroke-dasharray="1.5,6"/>
<line x1="665.5" y1="814" x2="665.5" y2="820" stroke="#4b4b4b" stroke-width="1.6"/>
<line x1="665.5" y1="880" x2="665.5" y2="886" stroke="#4b4b4b" stroke-width="1.6"/>
<line x1="740.5" y1="818.15" x2="740.5" y2="880" stroke="#545454" stroke-width="1.5" stroke-dasharray="1.5,6"/>
<line x1="740.5" y1="814" x2="740.5" y2="820" stroke="#4b4b4b" stroke-width="1.6"/>
<line x1="740.5" y1="880" x2="740.5" y2="886" stroke="#4b4b4b" stroke-width="1.6"/>
<line x1="816.5" y1="818.15" x2="816.5" y2="880" stroke="#545454" stroke-width="1.5" stroke-dasharray="1.5,6"/>
<line x1="816.5" y1="814" x2="816.5" y2="820" stroke="#4b4b4b" stroke-width="1.6"/>
<line x1="816.5" y1="880" x2="816.5" y2="886" stroke="#4b4b4b" stroke-width="1.6"/>
<line x1="910.5" y1="818.15" x2="910.5" y2="880" stroke="#545454" stroke-width="1.5" stroke-dasharray="1.5,6"/>
<line x1="910.5" y1="814" x2="910.5" y2="820" stroke="#4b4b4b" stroke-width="1.6"/>
<line x1="910.5" y1="880" x2="910.5" y2="886" stroke="#4b4b4b" stroke-width="1.6"/>
<line x1="985.5" y1="818.15" x2="985.5" y2="880" stroke="#545454" stroke-width="1.5" stroke-dasharray="1.5,6"/>
<line x1="985.5" y1="814" x2="985.5" y2="820" stroke="#4b4b4b" stroke-width="1.6"/>
<line x1="985.5" y1="880" x2="985.5" y2="886" stroke="#4b4b4b" stroke-width="1.6"/>
<line x1="1080.5" y1="818.15" x2="1080.5" y2="880" stroke="#545454" stroke-width="1.5" stroke-dasharray="1.5,6"/>
<line x1="1080.5" y1="814" x2="1080.5" y2="820" stroke="#4b4b4b" stroke-width="1.6"/>
<line x1="1080.5" y1="880" x2="1080.5" y2="886" stroke="#4b4b4b" stroke-width="1.6"/>
<line x1="1155.5" y1="818.15" x2="1155.5" y2="880" stroke="#545454" stroke-width="1.5" stroke-dasharray="1.5,6"/>
<line x1="1155.5" y1="814" x2="1155.5" y2="820" stroke="#4b4b4b" stroke-width="1.6"/>
<line x1="1155.5" y1="880" x2="1155.5" y2="886" stroke="#4b4b4b" stroke-width="1.6"/>
<line x1="1231.5" y1="818.15" x2="1231.5" y2="880" stroke="#545454" stroke-width="1.5" stroke-dasharray="1.5,6"/>
<line x1="1231.5" y1="814" x2="1231.5" y2="820" stroke="#4b4b4b" stroke-width="1.6"/>
<line x1="1231.5" y1="880" x2="1231.5" y2="886" stroke="#4b4b4b" stroke-width="1.6"/>
<line x1="1325.5" y1="818.15" x2="1325.5" y2="880" stroke="#545454" stroke-width="1.5" stroke-dasharray="1.5,6"/>
<line x1="1325.5" y1="814" x2="1325.5" y2="820" stroke="#4b4b4b" stroke-width="1.6"/>
<line x1="1325.5" y1="880" x2="1325.5" y2="886" stroke="#4b4b4b" stroke-width="1.6"/>
<line x1="1400.5" y1="818.15" x2="1400.5" y2="880" stroke="#545454" stroke-width="1.5" stroke-dasharray="1.5,6"/>
<line x1="1400.5" y1="814" x2="1400.5" y2="820" stroke="#4b4b4b" stroke-width="1.6"/>
<line x1="1400.5" y1="880" x2="1400.5" y2="886" stroke="#4b4b4b" stroke-width="1.6"/>
<polyline points="3,845.1 15,845.1 34,847.3 52,847.3 71,851.3 90,850.2 109,852.4 128,853.5 147,853.5 165,856.1 184,853.9 203,855 222,853.9 241,853.9 260,846.9 278,842.9 297,839.6 316,837.6 335,839.8 354,842.5 373,843.6 391.5,847.5 410.5,848.7 430,850.9 448,853.5 467,853.5 486,852 505,848.4 524,847.5 543,847.5 561,848.7 580,848.7 599,847.5 618,844.7 637,841.4" fill="none" stroke="#d0c48e" stroke-width="1.6" stroke-linejoin="round"/>
<text x="1426.8" y="826" font-family="Liberation Sans" font-size="14.6" font-weight="normal" fill="#9aa0a3" text-anchor="start" textLength="32.5" lengthAdjust="spacingAndGlyphs">1,000</text>
<text x="1426.8" y="855" font-family="Liberation Sans" font-size="14.6" font-weight="normal" fill="#9aa0a3" text-anchor="start" textLength="22" lengthAdjust="spacingAndGlyphs">750</text>
<rect x="1426.5" y="832" width="58" height="16.5" rx="4" fill="#f2e3a1"/>
<text x="1430" y="845" font-family="Liberation Sans" font-size="14" font-weight="normal" fill="#262010" text-anchor="start" textLength="51" lengthAdjust="spacingAndGlyphs">812.243</text>
<text x="1426.8" y="884" font-family="Liberation Sans" font-size="14.6" font-weight="normal" fill="#9aa0a3" text-anchor="start" textLength="23" lengthAdjust="spacingAndGlyphs">500</text>
<text x="80.0" y="903.2" font-family="Liberation Sans" font-size="15" font-weight="normal" fill="#9ba1a5" text-anchor="start">Sep</text>
<text x="174.0" y="903.2" font-family="Liberation Sans" font-size="15" font-weight="normal" fill="#9ba1a5" text-anchor="start">Oct</text>
<text x="250.0" y="903.2" font-family="Liberation Sans" font-size="15" font-weight="normal" fill="#9ba1a5" text-anchor="start">Nov</text>
<text x="325.0" y="903.2" font-family="Liberation Sans" font-size="15" font-weight="normal" fill="#9ba1a5" text-anchor="start">Dec</text>
<text x="420.0" y="903.2" font-family="Liberation Sans" font-size="15" font-weight="normal" fill="#9ba1a5" text-anchor="start">26</text>
<text x="495.0" y="903.2" font-family="Liberation Sans" font-size="15" font-weight="normal" fill="#9ba1a5" text-anchor="start">Feb</text>
<text x="570.0" y="903.2" font-family="Liberation Sans" font-size="15" font-weight="normal" fill="#9ba1a5" text-anchor="start">Mar</text>
<text x="665.0" y="903.2" font-family="Liberation Sans" font-size="15" font-weight="normal" fill="#9ba1a5" text-anchor="start">Apr</text>
<text x="740.0" y="903.2" font-family="Liberation Sans" font-size="15" font-weight="normal" fill="#9ba1a5" text-anchor="start">May</text>
<text x="816.0" y="903.2" font-family="Liberation Sans" font-size="15" font-weight="normal" fill="#9ba1a5" text-anchor="start">Jun</text>
<text x="910.0" y="903.2" font-family="Liberation Sans" font-size="15" font-weight="normal" fill="#9ba1a5" text-anchor="start">Jul</text>
<text x="985.0" y="903.2" font-family="Liberation Sans" font-size="15" font-weight="normal" fill="#9ba1a5" text-anchor="start">Aug</text>
<text x="1080.0" y="903.2" font-family="Liberation Sans" font-size="15" font-weight="normal" fill="#9ba1a5" text-anchor="start">Sep</text>
<text x="1155.0" y="903.2" font-family="Liberation Sans" font-size="15" font-weight="normal" fill="#9ba1a5" text-anchor="start">Oct</text>
<text x="1231.0" y="903.2" font-family="Liberation Sans" font-size="15" font-weight="normal" fill="#9ba1a5" text-anchor="start">Nov</text>
<text x="1325.0" y="903.2" font-family="Liberation Sans" font-size="15" font-weight="normal" fill="#9ba1a5" text-anchor="start">Dec</text>
<text x="1400.0" y="903.2" font-family="Liberation Sans" font-size="15" font-weight="normal" fill="#9ba1a5" text-anchor="start">27</text>
</svg>
</body></html>
